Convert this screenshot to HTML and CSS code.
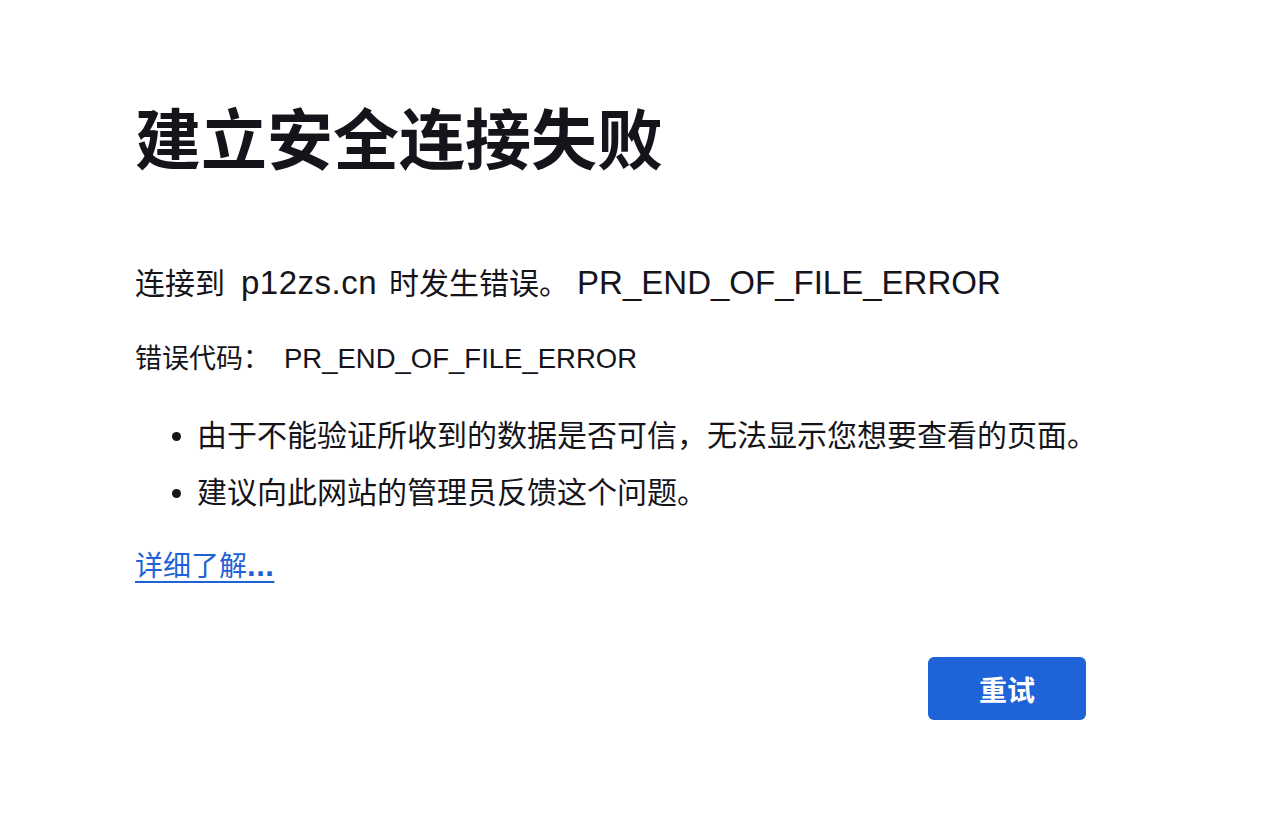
FILE: index.html
```html
<!DOCTYPE html>
<html lang="zh-CN">
<head>
    <meta charset="UTF-8">
    <meta name="viewport" content="width=device-width, initial-scale=1.0">
    <title>建立安全连接失败</title>
    <link rel="stylesheet" href="styles.css">
</head>
<body>
    <div class="container">
        <h1 class="title">建立安全连接失败</h1>
        <p class="short-desc">连接到<span class="host">p12zs.cn</span>时发生错误。<span class="code">PR_END_OF_FILE_ERROR</span></p>
        <p class="error-code">错误代码：<span class="code">PR_END_OF_FILE_ERROR</span></p>
        <ul class="long-desc">
            <li>由于不能验证所收到的数据是否可信，无法显示您想要查看的页面。</li>
            <li>建议向此网站的管理员反馈这个问题。</li>
        </ul>
        <a class="learn-more" href="#">详细了解<span class="dots">...</span></a>
        <div class="button-row">
            <button class="retry">重试</button>
        </div>
    </div>
</body>
</html>
```

FILE: styles.css
```css
body {
    margin: 0;
    background: #ffffff;
    color: #15141a;
    font-family: "Liberation Sans", "Noto Sans CJK SC", sans-serif;
}
.container {
    margin-left: 135px;
    width: 1000px;
    padding-top: 101px;
}
.title {
    margin: 0;
    font-size: 66px;
    line-height: 80px;
    font-weight: bold;
}

/* 拉丁字母在参考图里比汉字略大 */
.short-desc {
    margin: 82px 0 0;
    font-size: 30px;
    line-height: 40px;
}
.short-desc .host {
    font-size: 33px;
    letter-spacing: 0.5px;
    margin: 0 12px 0 16px;
}
.short-desc .code {
    font-size: 33px;
    margin-left: 8px;
}
.error-code {
    margin: 35px 0 0;
    font-size: 27px;
    line-height: 40px;
}
.error-code .code {
    font-size: 27.5px;
    margin-left: 14px;
}
.long-desc {
    margin: 28px 0 0;
    padding-left: 62px;
    font-size: 30px;
    line-height: 57px;
}
.long-desc li {
    margin: 0;
}
.learn-more {
    display: inline-block;
    margin-top: 25px;
    font-size: 28px;
    line-height: 40px;
    color: #1f62d6;
    text-decoration: underline;
    text-decoration-thickness: 2px;
    text-underline-offset: 5px;
}
.learn-more .dots {
    font-size: 31px;
    font-weight: bold;
    letter-spacing: 0.5px;
}
.button-row {
    display: flex;
    justify-content: flex-end;
    margin-top: 70px;
    padding-right: 49px;
}
.retry {
    width: 158px;
    height: 63px;
    border: none;
    border-radius: 6px;
    background-color: #1f63d8;
    color: #ffffff;
    font-family: "Liberation Sans", "Noto Sans CJK SC", sans-serif;
    font-size: 28px;
    font-weight: bold;
    cursor: pointer;
}
```
